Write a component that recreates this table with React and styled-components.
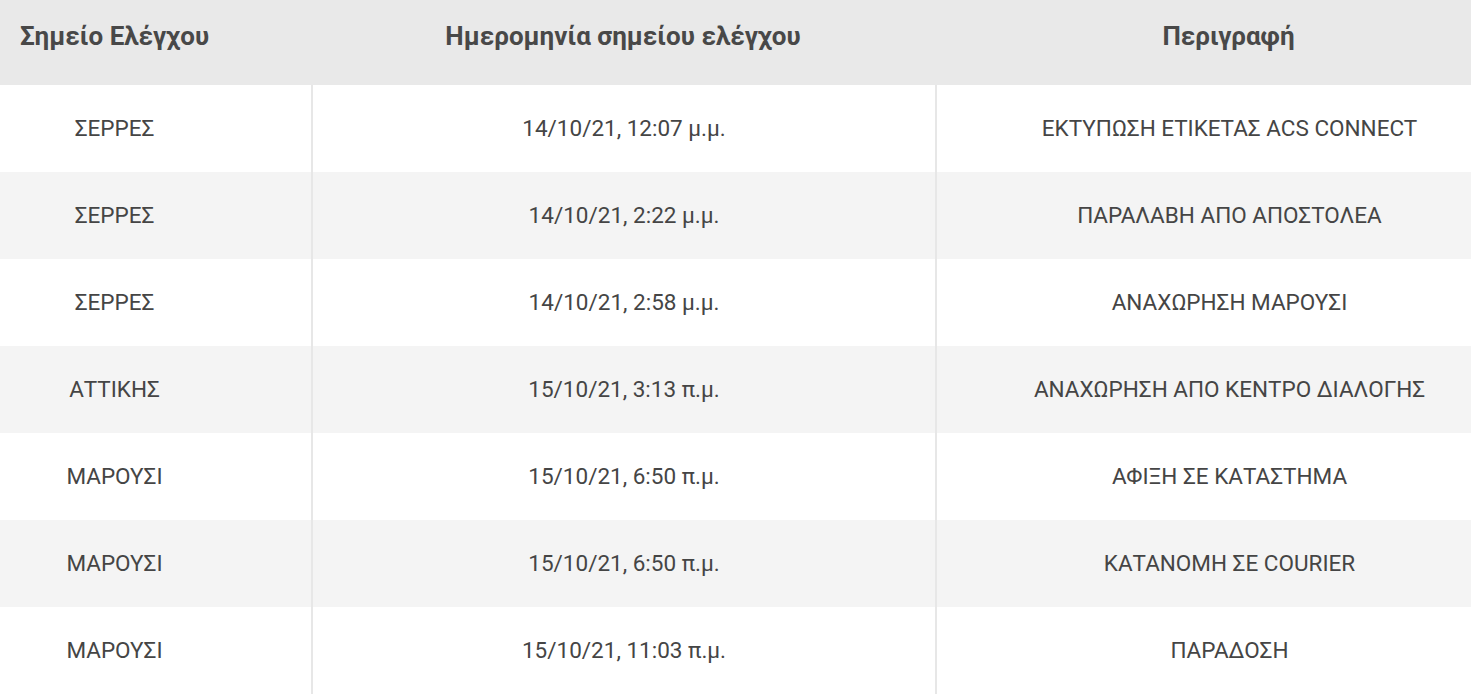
import React from "react";
import styled, { createGlobalStyle } from "styled-components";

const Global = createGlobalStyle`
  html, body {
    margin: 0;
    padding: 0;
    background: #ffffff;
    overflow: hidden;
  }
  body {
    font-family: Roboto, "Liberation Sans", Arial, sans-serif;
    color: #454545;
  }
`;

const Viewport = styled.div`
  width: 1471px;
  height: 699px;
  overflow: hidden;
`;

const Table = styled.div`
  margin-left: -82px;
  width: 1604px;
  display: grid;
  grid-template-columns: 393px 624px 587px;
`;

const HeadCell = styled.div`
  height: 85px;
  box-sizing: border-box;
  padding-bottom: 14px;
  background: #e9e9e9;
  display: flex;
  align-items: center;
  justify-content: center;
  font-size: 26px;
  font-weight: 700;
  color: #484848;
`;

const Cell = styled.div`
  height: 87px;
  box-sizing: border-box;
  padding-bottom: 2px;
  display: flex;
  align-items: center;
  justify-content: center;
  font-size: 22.5px;
  font-weight: 400;
  color: #454545;
  background: ${(p) => (p.$alt ? "#f4f4f4" : "#ffffff")};
  border-left: ${(p) => (p.$first ? "none" : "2px solid #e7e7e7")};
`;

const rows = [
  ["ΣΕΡΡΕΣ", "14/10/21, 12:07 μ.μ.", "ΕΚΤΥΠΩΣΗ ΕΤΙΚΕΤΑΣ ACS CONNECT"],
  ["ΣΕΡΡΕΣ", "14/10/21, 2:22 μ.μ.", "ΠΑΡΑΛΑΒΗ ΑΠΟ ΑΠΟΣΤΟΛΕΑ"],
  ["ΣΕΡΡΕΣ", "14/10/21, 2:58 μ.μ.", "ΑΝΑΧΩΡΗΣΗ ΜΑΡΟΥΣΙ"],
  ["ΑΤΤΙΚΗΣ", "15/10/21, 3:13 π.μ.", "ΑΝΑΧΩΡΗΣΗ ΑΠΟ ΚΕΝΤΡΟ ΔΙΑΛΟΓΗΣ"],
  ["ΜΑΡΟΥΣΙ", "15/10/21, 6:50 π.μ.", "ΑΦΙΞΗ ΣΕ ΚΑΤΑΣΤΗΜΑ"],
  ["ΜΑΡΟΥΣΙ", "15/10/21, 6:50 π.μ.", "ΚΑΤΑΝΟΜΗ ΣΕ COURIER"],
  ["ΜΑΡΟΥΣΙ", "15/10/21, 11:03 π.μ.", "ΠΑΡΑΔΟΣΗ"],
];

export default function App() {
  return (
    <Viewport>
      <Global />
      <Table>
        <HeadCell>Σημείο Ελέγχου</HeadCell>
        <HeadCell>Ημερομηνία σημείου ελέγχου</HeadCell>
        <HeadCell>Περιγραφή</HeadCell>
        {rows.map((r, i) =>
          r.map((c, j) => (
            <Cell key={`${i}-${j}`} $alt={i % 2 === 1} $first={j === 0}>
              {c}
            </Cell>
          ))
        )}
      </Table>
    </Viewport>
  );
}
